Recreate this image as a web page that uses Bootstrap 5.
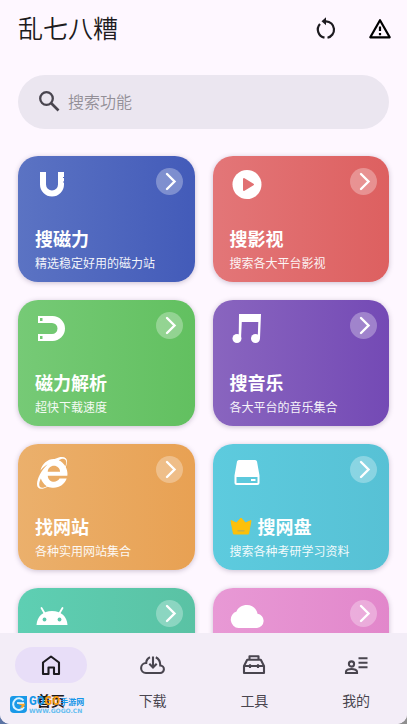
<!DOCTYPE html>
<html lang="zh-CN">
<head>
<meta charset="utf-8">
<meta name="viewport" content="width=device-width, initial-scale=1">
<title>乱七八糟</title>
<link href="https://cdn.jsdelivr.net/npm/bootstrap@5.3.0/dist/css/bootstrap.min.css" rel="stylesheet">
<style>
body{font-family:"Noto Sans CJK SC",sans-serif;background:linear-gradient(90deg,#5b74a4,#8f8f8f);color:#1d1b20}
.app{background:#fef7ff;border-radius:0 0 10px 10px}
.topbar{height:57px;padding:0 15px 0 18px}
.topbar h1{font-size:25px;line-height:32px;font-weight:350;padding-bottom:4px}
.actions{gap:30px}
.plain{background:none;border:0;padding:0;line-height:0;color:inherit}
.feed{padding:18px 18px 0;scrollbar-width:none}
.feed::-webkit-scrollbar{display:none}
.search{height:54px;background:#ebe6f0;padding:0 18px;gap:2px;margin-bottom:27px}
.search input{border:0;background:none;outline:0;font-size:16px;line-height:24px;font-weight:350;color:#1d1b20;min-width:0;padding:0 0 2px 2px}
.search input::placeholder{color:#938f97;opacity:1}
.tiles{--bs-gutter-x:18px;--bs-gutter-y:18px}
.tile{height:126px;border-radius:20px;padding:10px 12px 10px 17px;color:#fff;box-shadow:0 1px 5px rgba(50,30,70,.25)}
.tile h2{font-size:18px;line-height:22px;font-weight:700;gap:6px}
.tile p{font-size:12px;line-height:18px;margin-top:5px;opacity:.93}
.go{width:27px;height:27px;background:rgba(255,255,255,.3);margin-top:2px}
.t-blue{background:linear-gradient(90deg,#5b73c3,#435bb9)}
.t-red{background:linear-gradient(90deg,#e37678,#dd6060)}
.t-green{background:linear-gradient(90deg,#76ca76,#62c060)}
.t-purple{background:linear-gradient(90deg,#8965bf,#744ab5)}
.t-orange{background:linear-gradient(90deg,#ebb06c,#e8a153)}
.t-cyan{background:linear-gradient(90deg,#5dcbde,#57c1d5)}
.t-teal{background:linear-gradient(90deg,#5ecfb3,#5ac2a4)}
.t-pink{background:linear-gradient(90deg,#e899d5,#e287cb)}
.tabs{background:#f3edf7;padding:14px 0;border-radius:0 0 10px 10px}
.tabs a{color:#49454f;font-size:14px;line-height:20px;gap:7px}
.tabs a.current{color:#1d1b20;font-weight:700}
.pill{width:72px;height:36px}
.current .pill{background:#e8def8}
.brand{left:9px;bottom:10px;gap:1px;pointer-events:none}
.brand-row{font:700 13px/13px "Liberation Mono",monospace;color:#1696e8}
.brand-row .o{color:#fb9b0b}
.brand-row .zh{font:700 8px/13px "Noto Sans CJK SC",sans-serif}
.brand-url{font:700 6px/6px "DejaVu Sans",sans-serif;color:#64bdf1}
</style>
<script src="https://cdn.jsdelivr.net/npm/bootstrap@5.3.0/dist/js/bootstrap.bundle.min.js"></script>
</head>
<body>
<svg class="d-none"><symbol id="chev" viewBox="0 0 27 27"><path d="M11 6l7.500 7.500-7.500 7.500" fill="none" stroke="#fff" stroke-width="2.400" stroke-linecap="round"/></symbol></svg>
<div class="app vh-100 d-flex flex-column position-relative">
<header class="topbar d-flex align-items-center justify-content-between flex-shrink-0">
  <h1 class="mb-0">乱七八糟</h1>
  <div class="actions d-flex">
    <button class="plain" type="button" aria-label="刷新"><svg width="24" height="24" viewBox="0 0 24 24" fill="none" stroke="#1d1b20" stroke-width="2.200"><path d="M10.500 20.700A8.300 8.300 0 0 1 6 7M13.500 20.700A8.300 8.300 0 0 0 12 4.300"/><path d="M7.500 4.300l4.500-4v8z" fill="#1d1b20" stroke="none"/></svg></button>
    <button class="plain" type="button" aria-label="公告"><svg width="24" height="24" viewBox="0 0 24 24" fill="none" stroke="#000" stroke-width="2.200" stroke-linejoin="round"><path d="M12 3.200L21.700 20.300H2.300z"/><path d="M12 9.500v4.500M12 16v2.200"/></svg></button>
  </div>
</header>
<main class="feed flex-grow-1 overflow-auto">
  <div class="search d-flex align-items-center rounded-pill">
    <svg width="28" height="28" viewBox="0 0 28 28" class="flex-shrink-0" fill="none" stroke="#49454f" stroke-width="2.300"><circle cx="10.500" cy="10.500" r="6.300"/><path d="M15 15l7.500 7.500" stroke-width="2.700"/></svg>
    <input class="flex-grow-1" type="text" placeholder="搜索功能" aria-label="搜索功能">
  </div>
  <div class="tiles row row-cols-2">
    <div class="col"><a href="#" class="tile t-blue d-flex flex-column text-decoration-none">
      <span class="d-flex justify-content-between"><svg width="36" height="36" viewBox="0 0 36 36"><path d="M8 6v12.500a9 9 0 0 0 18 0V6" fill="none" stroke="#fff" stroke-width="6"/><path d="M28 11.500h1.500M28 16h1.500" stroke="#526bc0"/></svg><span class="go rounded-circle"><svg class="d-block" width="27" height="27"><use href="#chev"/></svg></span></span>
      <h2 class="mt-auto mb-0">搜磁力</h2><p class="mb-0">精选稳定好用的磁力站</p></a></div>
    <div class="col"><a href="#" class="tile t-red d-flex flex-column text-decoration-none">
      <span class="d-flex justify-content-between"><svg width="36" height="36" viewBox="0 0 36 36"><circle cx="17" cy="18.500" r="14.500" fill="#fff"/><path d="M14 13v11l9-5.500z" fill="#e17072" stroke="#e17072" stroke-width="2" stroke-linejoin="round"/></svg><span class="go rounded-circle"><svg class="d-block" width="27" height="27"><use href="#chev"/></svg></span></span>
      <h2 class="mt-auto mb-0">搜影视</h2><p class="mb-0">搜索各大平台影视</p></a></div>
    <div class="col"><a href="#" class="tile t-green d-flex flex-column text-decoration-none">
      <span class="d-flex justify-content-between"><svg width="36" height="36" viewBox="0 0 36 36"><path fill="#fff" fill-rule="evenodd" d="M3 6h14.500a12.500 12.500 0 0 1 0 25H3v-7h14a5.500 5.500 0 0 0 0-11H3zM5 8v3h2.500V8zM5 26v3h2.500v-3z"/></svg><span class="go rounded-circle"><svg class="d-block" width="27" height="27"><use href="#chev"/></svg></span></span>
      <h2 class="mt-auto mb-0">磁力解析</h2><p class="mb-0">超快下载速度</p></a></div>
    <div class="col"><a href="#" class="tile t-purple d-flex flex-column text-decoration-none">
      <span class="d-flex justify-content-between"><svg width="36" height="36" viewBox="0 0 36 36"><g fill="#fff"><path d="M9 4h22l-1 24.500h-2.300L28.300 12H11.800L11 28.500H8.700z"/><circle cx="7" cy="28.500" r="4.500"/><circle cx="25.500" cy="28.500" r="4.500"/></g></svg><span class="go rounded-circle"><svg class="d-block" width="27" height="27"><use href="#chev"/></svg></span></span>
      <h2 class="mt-auto mb-0">搜音乐</h2><p class="mb-0">各大平台的音乐集合</p></a></div>
    <div class="col"><a href="#" class="tile t-orange d-flex flex-column text-decoration-none">
      <span class="d-flex justify-content-between"><svg width="36" height="36" viewBox="0 0 36 36"><path transform="translate(2 3) scale(.0595 .0620)" fill="#fff" d="M483.049 159.706c10.855-24.575 21.424-60.438 21.424-87.871 0-72.722-79.641-98.371-209.673-38.577-107.632-7.181-211.221 73.67-237.098 186.457 30.852-34.862 78.271-82.298 121.977-101.158C125.404 166.85 79.128 228.002 43.992 291.725 23.246 329.651 0 390.94 0 436.747c0 98.575 92.854 86.5 180.251 42.006 31.423 15.43 66.559 15.573 101.695 15.573 97.124 0 184.249-54.294 216.814-146.022H377.927c-52.509 88.593-196.819 52.996-196.819-47.436H509.9c6.407-43.581-1.655-95.715-26.851-141.162zM64.559 346.877c17.711 51.15 53.703 95.871 100.266 123.304-88.741 48.94-173.267 29.096-100.266-123.304zm115.977-108.873c2-55.152 50.276-94.871 103.98-94.871 53.418 0 101.981 39.719 103.981 94.871H180.536zm184.536-187.6c21.425-10.287 48.563-22.003 72.558-22.003 31.422 0 54.274 21.717 54.274 53.722 0 20.003-7.427 49.007-14.569 67.867-26.28-42.292-65.986-81.584-112.263-99.586z"/></svg><span class="go rounded-circle"><svg class="d-block" width="27" height="27"><use href="#chev"/></svg></span></span>
      <h2 class="mt-auto mb-0">找网站</h2><p class="mb-0">各种实用网站集合</p></a></div>
    <div class="col"><a href="#" class="tile t-cyan d-flex flex-column text-decoration-none">
      <span class="d-flex justify-content-between"><svg width="36" height="36" viewBox="0 0 36 36"><path fill="#fff" fill-rule="evenodd" d="M9 6h16a2 2 0 0 1 2 1.500l2.500 14V29a2 2 0 0 1-2 2h-21a2 2 0 0 1-2-2v-7.500L7 7.500A2 2 0 0 1 9 6zM6.500 23v6h21v-6zM21 25h4.500v2H21z"/></svg><span class="go rounded-circle"><svg class="d-block" width="27" height="27"><use href="#chev"/></svg></span></span>
      <h2 class="mt-auto mb-0 d-flex align-items-center"><svg width="22" height="18" viewBox="0 0 22 18"><path fill="#fcc00a" stroke="#fcc00a" stroke-linejoin="round" d="M1 3.500l5.500 2.500L11 1l4.500 5L21 3.500 18.500 17h-15z"/><path d="M7.500 13.800h7" stroke="#c9b04a" stroke-width="1.500"/></svg>搜网盘</h2><p class="mb-0">搜索各种考研学习资料</p></a></div>
    <div class="col"><a href="#" class="tile t-teal d-flex flex-column text-decoration-none" aria-label="安卓">
      <span class="d-flex justify-content-between"><svg width="36" height="36" viewBox="0 0 36 36"><path fill="#fff" d="M1.500 27C2 18.500 8 13 17 13s15 5.500 15.500 14z"/><path d="M6.500 10l3.500 6M27.500 10L24 16" stroke="#fff" stroke-width="1.800" stroke-linecap="round"/><g fill="#5bc8ab"><circle cx="9.500" cy="21.500" r="1.900"/><circle cx="24.500" cy="21.500" r="1.900"/></g></svg><span class="go rounded-circle"><svg class="d-block" width="27" height="27"><use href="#chev"/></svg></span></span></a></div>
    <div class="col"><a href="#" class="tile t-pink d-flex flex-column text-decoration-none" aria-label="云">
      <span class="d-flex justify-content-between"><svg width="36" height="36" viewBox="0 0 36 36"><path fill="#fff" d="M8.500 30a8.500 8.500 0 0 1-2-16.500C8 9.500 12 7 17 7s9.500 3.500 10.500 8.700A7.200 7.200 0 0 1 27 30z"/></svg><span class="go rounded-circle"><svg class="d-block" width="27" height="27"><use href="#chev"/></svg></span></span></a></div>
  </div>
</main>
<nav class="tabs d-flex flex-shrink-0">
  <a href="#" class="current col d-flex flex-column align-items-center text-decoration-none" aria-current="page"><span class="pill rounded-pill d-flex align-items-center justify-content-center"><svg width="24" height="24" viewBox="0 0 24 24" fill="none" stroke="#1d1b20" stroke-width="2.100" stroke-linejoin="round"><path d="M4 9.500L12 3.500l8 6V21h-5v-6.500H9.500V21H4z"/></svg></span>首页</a>
  <a href="#" class="col d-flex flex-column align-items-center text-decoration-none"><span class="pill d-flex align-items-center justify-content-center"><svg width="26" height="24" viewBox="0 0 26 24" fill="none" stroke="#49454f" stroke-width="2.100"><path d="M10 4.200A6.500 6.500 0 0 0 6.200 10 4.700 4.700 0 0 0 6 20h14a3.700 3.700 0 0 0 .3-7.500C20.300 8.500 18.500 5.500 15.800 4.200"/><path d="M13 3.500V14M9.300 10.700L13 14.400l3.700-3.700"/></svg></span>下载</a>
  <a href="#" class="col d-flex flex-column align-items-center text-decoration-none"><span class="pill d-flex align-items-center justify-content-center"><svg width="24" height="24" viewBox="0 0 24 24" fill="none" stroke="#49454f" stroke-width="2.100" stroke-linejoin="round"><path d="M7.500 6.500V3.300h9v3.200M2 20v-7l3.200-6.300h13.600L22 13v7zM2 13h20M8 11.200v3.800M16 11.200v3.800"/></svg></span>工具</a>
  <a href="#" class="col d-flex flex-column align-items-center text-decoration-none"><span class="pill d-flex align-items-center justify-content-center"><svg width="24" height="24" viewBox="0 0 24 24" fill="none" stroke="#49454f" stroke-width="2.100"><circle cx="7.500" cy="11" r="2.600"/><path d="M2 20v-1.300c0-1.500 2.500-2.700 5.500-2.700s5.500 1.200 5.500 2.700V20z"/><path d="M14.500 5.200h9M14.500 9.700h9M14.500 14.200h9"/></svg></span>我的</a>
</nav>
<div class="brand position-absolute d-flex align-items-center">
  <svg width="19" height="19" viewBox="0 0 19 19"><path d="M4 1h14v13a4 4 0 0 1-4 4H5a4 4 0 0 1-4-4V4a3 3 0 0 1 3-3z" fill="#1999e8"/><path d="M14.500 5.500A5.800 5.800 0 1 0 15 12" fill="none" stroke="#d9f2ff" stroke-width="2"/><path d="M8 8.500h8c0 3-2 5-5 4.500l2-2.300z" fill="#fba52b"/><path d="M8 8h7" stroke="#fff" stroke-width="1.500"/></svg>
  <div><div class="brand-row d-flex"><span>GO</span><span class="o">GO</span><span class="zh">手游网</span></div><div class="brand-url">WWW.GOGO.CN</div></div>
</div>
</div>
</body>
</html>
